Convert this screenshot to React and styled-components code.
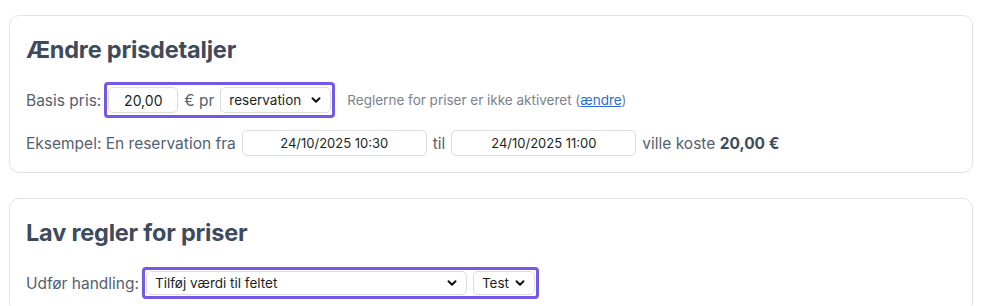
import React from "react";
import styled, { createGlobalStyle } from "styled-components";
import { ChevronDown } from "lucide-react";

const GlobalStyle = createGlobalStyle`
    body {
        margin: 0;
        background-color: #ffffff;
        font-family: Inter, "Noto Sans", "Liberation Sans", sans-serif;
        color: #566070;
    }
`

const Page = styled.div`
    padding: 15px 11px 0 9px;
`

const Card = styled.section`
    border: 1px solid #e3e4e6;
    border-radius: 10px;
    padding: 19px 16px 11px 16px;
    margin-bottom: 25px;
`

const Title = styled.h2`
    margin: 0 0 18px 0;
    font-size: 23.5px;
    line-height: 29px;
    font-weight: 700;
    color: #3f4a5c;
    letter-spacing: -0.2px;
`

const Row = styled.div`
    display: flex;
    align-items: center;
    min-height: 36px;
    gap: 6px;
    font-size: 15.5px;
    & + & {
        margin-top: 7px;
    }
`

const Label = styled.span`
    white-space: nowrap;
`

const Highlight = styled.div`
    display: flex;
    align-items: center;
    gap: 6px;
    border: 3px solid #7558e6;
    border-radius: 4px;
    padding: ${p => p.$tight ? "1px 1px" : "2px 1px"};
    margin-left: -3px;
`

const TextInput = styled.div`
    box-sizing: border-box;
    width: ${p => p.$width}px;
    height: 26px;
    border: 1px solid #dcdde0;
    border-radius: 5px;
    background: #fff;
    display: flex;
    align-items: center;
    justify-content: center;
    font-size: ${p => p.$size || 13}px;
    color: #1d1f23;
`

const Select = styled.div`
    box-sizing: border-box;
    width: ${p => p.$width}px;
    height: ${p => p.$height || 26}px;
    border: 1px solid #dcdde0;
    border-radius: 5px;
    background: #fff;
    display: flex;
    align-items: center;
    justify-content: space-between;
    padding: 0 7px 0 8px;
    font-size: 13.5px;
    color: #1d1f23;
    svg {
        flex-shrink: 0;
    }
`

const Hint = styled.span`
    font-size: 13.5px;
    color: #7a828f;
    margin-left: 6px;
    white-space: nowrap;
    a {
        color: #2f6bd8;
        text-decoration: underline;
    }
`

const Price = styled.strong`
    font-weight: 700;
    color: #3f4a5c;
`

function App () {
    return (
        <div>
            <GlobalStyle />
            <Page>
                <Card>
                    <Title>Ændre prisdetaljer</Title>
                    <Row>
                        <Label>Basis pris:</Label>
                        <Highlight>
                            <TextInput $width={70} $size={14}>20,00</TextInput>
                            <Label>€ pr</Label>
                            <Select $width={111}>
                                reservation
                                <ChevronDown size={14} strokeWidth={3.4} color="#111" />
                            </Select>
                        </Highlight>
                        <Hint>Reglerne for priser er ikke aktiveret (<a href="#">ændre</a>)</Hint>
                    </Row>
                    <Row>
                        <Label>Eksempel: En reservation fra</Label>
                        <TextInput $width={185}>24/10/2025 10:30</TextInput>
                        <Label>til</Label>
                        <TextInput $width={185}>24/10/2025 11:00</TextInput>
                        <Label>ville koste <Price>20,00 €</Price></Label>
                    </Row>
                </Card>
                <Card>
                    <Title>Lav regler for priser</Title>
                    <Row>
                        <Label>Udfør handling:</Label>
                        <Highlight $tight>
                            <Select $width={321} $height={24}>
                                Tilføj værdi til feltet
                                <ChevronDown size={14} strokeWidth={3.4} color="#111" />
                            </Select>
                            <Select $width={62} $height={24}>
                                Test
                                <ChevronDown size={14} strokeWidth={3.4} color="#111" />
                            </Select>
                        </Highlight>
                    </Row>
                </Card>
            </Page>
        </div>
    )
}

export default App;
